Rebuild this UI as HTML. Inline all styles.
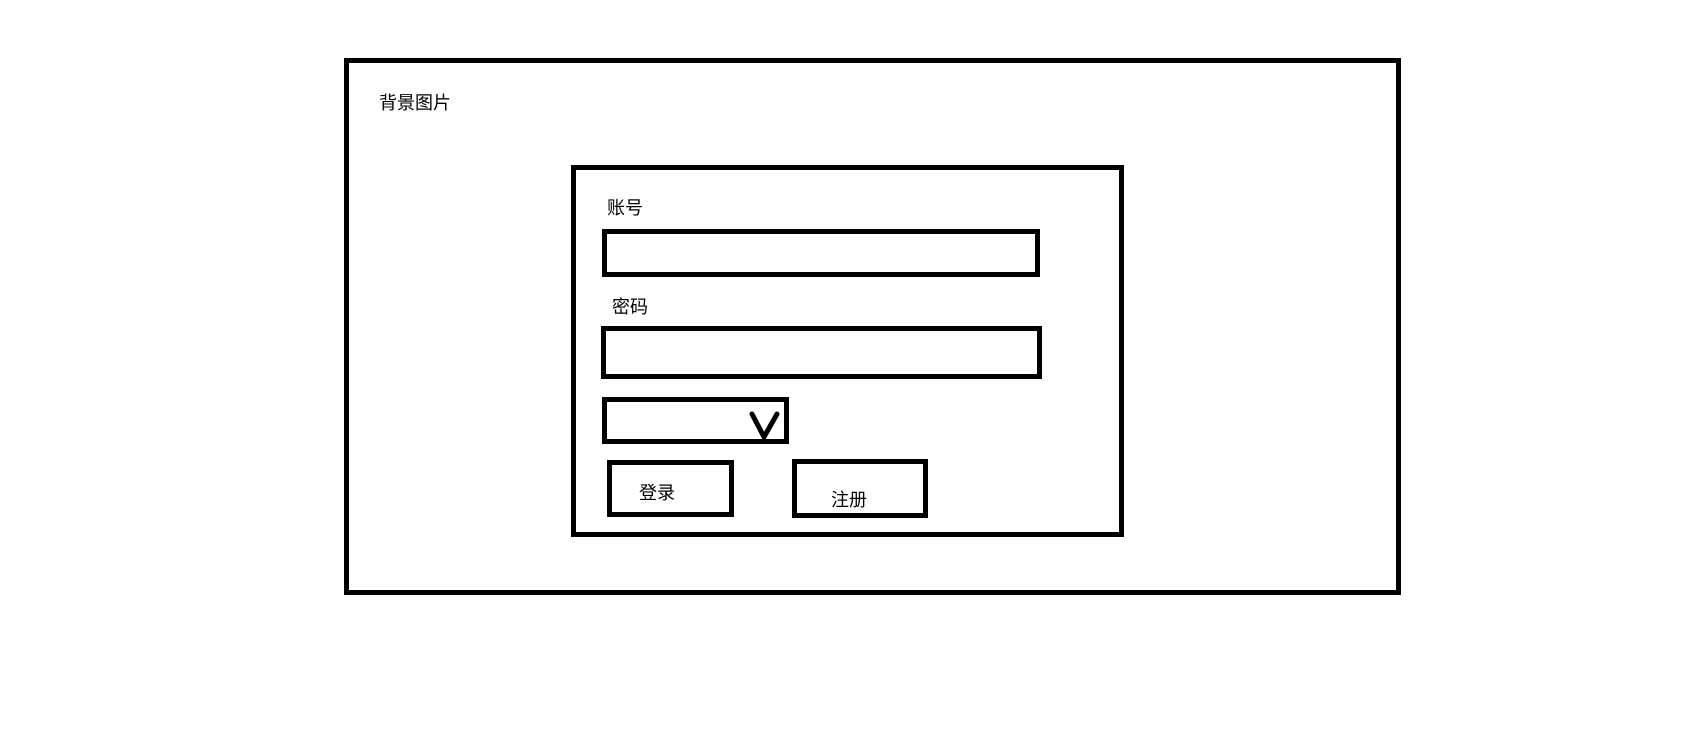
<!DOCTYPE html>
<html><head><meta charset="utf-8"><style>
body{margin:0;width:1685px;height:738px;background:#fff;position:relative;overflow:hidden;font-family:"Liberation Sans","Noto Sans CJK SC",sans-serif;}
.b{position:absolute;border:5px solid #000;box-sizing:border-box;}
.t{position:absolute;font-size:18px;line-height:20px;color:#000;white-space:nowrap;}
</style></head><body>
<div class="b" style="left:344px;top:58px;width:1057px;height:537px;"></div>
<div class="t" style="left:379px;top:93px;">背景图片</div>
<div class="b" style="left:571px;top:165px;width:553px;height:372px;"></div>
<div class="t" style="left:607px;top:198px;">账号</div>
<div class="b" style="left:602px;top:229px;width:438px;height:48px;"></div>
<div class="t" style="left:612px;top:297px;">密码</div>
<div class="b" style="left:601px;top:326px;width:441px;height:53px;"></div>
<div class="b" style="left:602px;top:397px;width:187px;height:47px;"></div>
<svg style="position:absolute;left:748px;top:410px" width="34" height="32"><path d="M4 4 L16 27 L29 4" fill="none" stroke="#000" stroke-width="5" stroke-linecap="round" stroke-linejoin="round"/></svg>
<div class="b" style="left:607px;top:460px;width:127px;height:57px;"></div>
<div class="t" style="left:639px;top:483px;">登录</div>
<div class="b" style="left:792px;top:459px;width:136px;height:59px;"></div>
<div class="t" style="left:831px;top:490px;">注册</div>
</body></html>
